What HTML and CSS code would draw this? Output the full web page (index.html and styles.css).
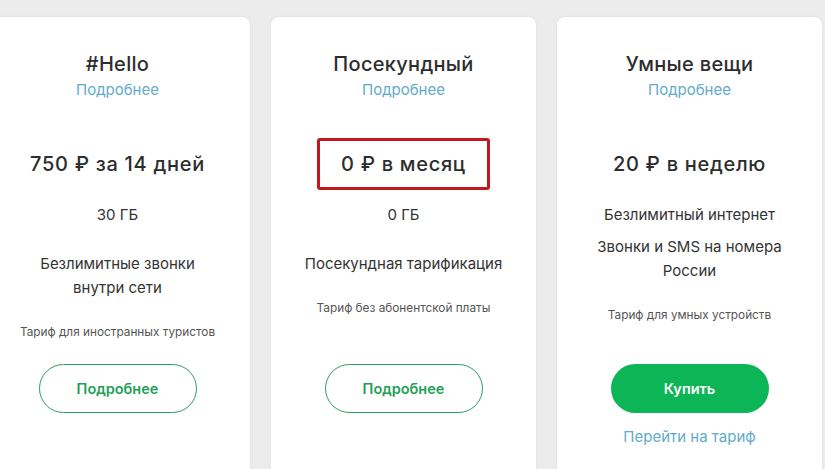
FILE: index.html
```html
<!DOCTYPE html>
<html lang="ru">
<head>
<meta charset="utf-8">
<title>Тарифы</title>
<link rel="stylesheet" href="styles.css">
</head>
<body>
<div class="cards">
  <div class="card">
    <div class="title">#Hello</div>
    <a class="more" href="#">Подробнее</a>
    <div class="price">750 ₽ за 14 дней</div>
    <div class="data">30 ГБ</div>
    <div class="feature feature--spaced">Безлимитные звонки<br>внутри сети</div>
    <div class="note">Тариф для иностранных туристов</div>
    <div class="footer">
      <a class="btn btn--outline" href="#">Подробнее</a>
    </div>
  </div>
  <div class="card">
    <div class="title">Посекундный</div>
    <a class="more" href="#">Подробнее</a>
    <div class="price price--marked">0 ₽ в месяц</div>
    <div class="data">0 ГБ</div>
    <div class="feature feature--spaced">Посекундная тарификация</div>
    <div class="note">Тариф без абонентской платы</div>
    <div class="footer">
      <a class="btn btn--outline" href="#">Подробнее</a>
    </div>
  </div>
  <div class="card">
    <div class="title">Умные вещи</div>
    <a class="more" href="#">Подробнее</a>
    <div class="price">20 ₽ в неделю</div>
    <div class="data">Безлимитный интернет</div>
    <div class="feature">Звонки и SMS на номера<br>России</div>
    <div class="note">Тариф для умных устройств</div>
    <div class="footer">
      <a class="btn btn--filled" href="#">Купить</a>
      <a class="switch" href="#">Перейти на тариф</a>
    </div>
  </div>
</div>
</body>
</html>
```

FILE: styles.css
```css
* { box-sizing: border-box; }

body {
  margin: 0;
  background: #ececec;
  font-family: "Inter", "Roboto", "Liberation Sans", sans-serif;
  color: #333;
  overflow: hidden;
}

a { text-decoration: none; }

.cards {
  display: flex;
  gap: 21px;
  margin-left: -15px;
  padding-top: 17px;
}

.card {
  flex: none;
  width: 265px;
  height: 470px;
  background: #fff;
  border-radius: 8px;
  box-shadow: 0 0 3px rgba(0, 0, 0, 0.07);
  display: flex;
  flex-direction: column;
  align-items: center;
  text-align: center;
  padding: 35px 0 40px;
}

.title {
  font-size: 20px;
  line-height: 24px;
  font-weight: 500;
  letter-spacing: 0.3px;
  color: #2d2d2d;
}

.more {
  margin-top: 4px;
  font-size: 15px;
  line-height: 20px;
  color: #62abcb;
}

.price {
  margin-top: 38px;
  padding: 9px 21px;
  border: 3px solid transparent;
  border-radius: 3px;
  font-size: 20px;
  line-height: 28px;
  font-weight: 500;
  letter-spacing: 0.7px;
  color: #2d2d2d;
}

.price--marked {
  border-color: #c4161c;
}

.data {
  margin-top: 15px;
  font-size: 15px;
  line-height: 20px;
  color: #333;
}

.feature {
  margin-top: 10px;
  font-size: 15px;
  line-height: 24px;
  color: #333;
}

.feature--spaced {
  margin-top: 27px;
}

.note {
  margin-top: 24px;
  font-size: 11.8px;
  line-height: 16px;
  color: #555;
}

.footer {
  margin-top: auto;
  height: 83px;
  display: flex;
  flex-direction: column;
  align-items: center;
  gap: 14px;
}

.btn {
  width: 158px;
  height: 49px;
  border-radius: 25px;
  display: flex;
  align-items: center;
  justify-content: center;
  font-size: 14.5px;
  font-weight: 600;
}

.btn--outline {
  border: 1px solid #2a9d62;
  color: #1f9f57;
}

.btn--filled {
  background: #0cb656;
  color: #fff;
}

.switch {
  font-size: 15px;
  line-height: 20px;
  color: #62abcb;
}
```
